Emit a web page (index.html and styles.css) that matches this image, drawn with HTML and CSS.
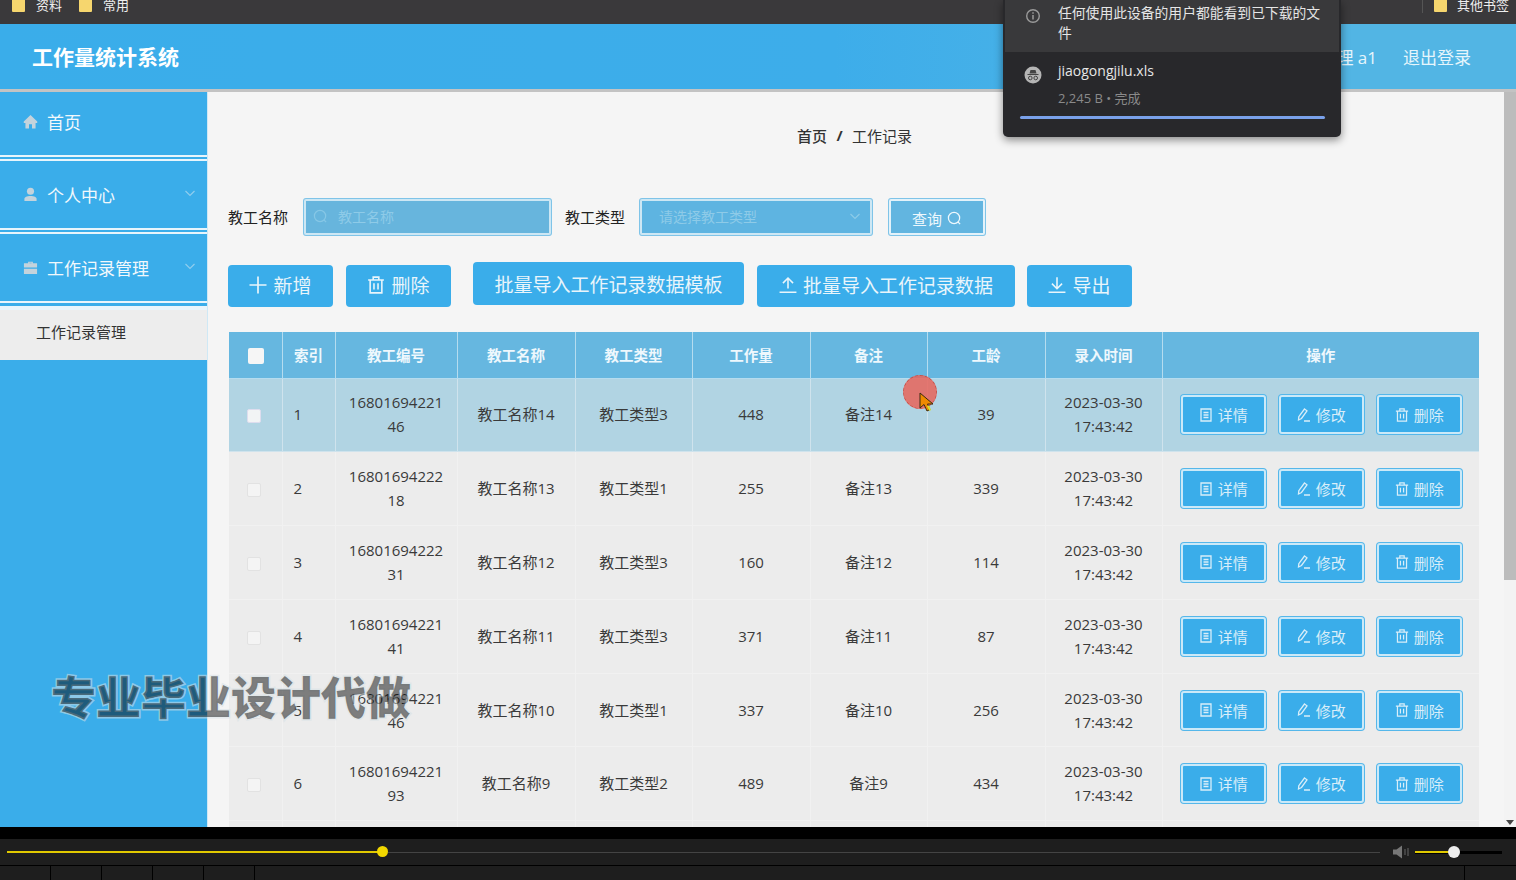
FILE: index.html
```html
<!DOCTYPE html>
<html lang="zh-CN">
<head>
<meta charset="utf-8">
<title>工作量统计系统</title>
<link rel="stylesheet" href="styles.css">
</head>
<body>
<svg class="sprite" aria-hidden="true">
  <symbol id="i-home" viewBox="0 0 16 16"><path d="M8 1 .8 8v1.500h1.800V15.500h3.800v-4.700h3.200v4.700h3.800V9.500h1.800V8z" fill="currentColor"/></symbol>
  <symbol id="i-user" viewBox="0 0 16 16"><circle cx="8" cy="4.500" r="3.800" fill="currentColor"/><path d="M1.500 15v-2.200C1.500 10.500 4 9.500 8 9.500s6.500 1 6.500 3.300V15z" fill="currentColor"/></symbol>
  <symbol id="i-case" viewBox="0 0 16 16"><path d="M5.500 3.500V1.800h5v1.700h4.500V8H1V3.500zM6.800 3.500h2.400v-.5H6.800zM1 9.200h14V15H1z" fill="currentColor"/></symbol>
  <symbol id="i-chev" viewBox="0 0 12 12"><path d="M1.500 4 6 8.500 10.500 4" fill="none" stroke="currentColor" stroke-width="1.200"/></symbol>
  <symbol id="i-search" viewBox="0 0 16 16"><circle cx="7.500" cy="7.500" r="6" fill="none" stroke="currentColor" stroke-width="1.300"/><path d="m11.500 11.500 2.500 2.500" stroke="currentColor" stroke-width="1.300"/></symbol>
  <symbol id="i-plus" viewBox="0 0 18 18"><path d="M9 .5v17M.5 9h17" stroke="currentColor" stroke-width="1.700" fill="none"/></symbol>
  <symbol id="i-trash" viewBox="0 0 16 16"><path d="M1 3.500h14M5.500 3.500V1h5v2.500M2.800 3.500V15h10.400V3.500M6.200 6.500v5.500M9.800 6.500v5.500" fill="none" stroke="currentColor" stroke-width="1.400"/></symbol>
  <symbol id="i-up" viewBox="0 0 16 16"><path d="M8 11V2M3.500 6.300 8 1.800l4.500 4.500M.5 14.500h15" fill="none" stroke="currentColor" stroke-width="1.400"/></symbol>
  <symbol id="i-down" viewBox="0 0 16 16"><path d="M8 1v10M3.500 6.800 8 11.300l4.500-4.500M.5 14.500h15" fill="none" stroke="currentColor" stroke-width="1.400"/></symbol>
  <symbol id="i-doc" viewBox="0 0 14 14"><path d="M2 1h10v12H2zM4.500 4.500h5M4.500 7h5M4.500 9.500h5" fill="none" stroke="currentColor" stroke-width="1.300"/></symbol>
  <symbol id="i-pen" viewBox="0 0 14 14"><path d="M7.500 1 10 2.800 4.500 10.500 1.500 12l.3-3.300zM7 13h6" fill="none" stroke="currentColor" stroke-width="1.300"/></symbol>
</svg>

<div class="bookmarks">
  <span class="mark"><i class="folder"></i>资料</span>
  <span class="mark"><i class="folder"></i>常用</span>
  <span class="mark mark-end"><i class="folder"></i>其他书签</span>
</div>

<header class="topbar">
  <h1 class="brand">工作量统计系统</h1>
  <div class="account"><span>管理 a1</span><span class="logout">退出登录</span></div>
</header>

<div class="shell">
  <nav class="side">
    <a class="nav-item nav-first"><svg class="nav-icon"><use href="#i-home"/></svg>首页</a>
    <div class="sep"></div>
    <a class="nav-item"><svg class="nav-icon"><use href="#i-user"/></svg>个人中心<svg class="chev"><use href="#i-chev"/></svg></a>
    <div class="sep"></div>
    <a class="nav-item"><svg class="nav-icon"><use href="#i-case"/></svg>工作记录管理<svg class="chev"><use href="#i-chev"/></svg></a>
    <div class="sep sep-wide"></div>
    <a class="nav-sub">工作记录管理</a>
  </nav>

  <main class="main">
    <div class="crumb"><b>首页</b><span class="slash">/</span><span>工作记录</span></div>

    <div class="search">
      <label class="lbl">教工名称</label>
      <div class="field field-name"><svg class="field-icon"><use href="#i-search"/></svg>教工名称</div>
      <label class="lbl lbl-type">教工类型</label>
      <div class="field field-type">请选择教工类型<svg class="field-chev"><use href="#i-chev"/></svg></div>
      <button class="query">查询<svg class="query-icon"><use href="#i-search"/></svg></button>
    </div>

    <div class="toolbar">
      <button class="tool"><svg class="tool-icon"><use href="#i-plus"/></svg>新增</button>
      <button class="tool"><svg class="tool-icon"><use href="#i-trash"/></svg>删除</button>
      <button class="tool tool-raised">批量导入工作记录数据模板</button>
      <button class="tool tool-wide"><svg class="tool-icon"><use href="#i-up"/></svg>批量导入工作记录数据</button>
      <button class="tool tool-last"><svg class="tool-icon"><use href="#i-down"/></svg>导出</button>
    </div>

    <table class="grid">
      <colgroup>
        <col class="c-a"><col class="c-a"><col class="c-b"><col class="c-c"><col class="c-d"><col class="c-c"><col class="c-d"><col class="c-c"><col class="c-d"><col class="c-e">
      </colgroup>
      <thead>
        <tr><th><i class="check check-head"></i></th><th>索引</th><th>教工编号</th><th>教工名称</th><th>教工类型</th><th>工作量</th><th>备注</th><th>工龄</th><th>录入时间</th><th>操作</th></tr>
      </thead>
      <tbody>
        <tr class="hover"><td><i class="check"></i></td><td class="idx">1</td><td class="long">1680169422146</td><td>教工名称14</td><td>教工类型3</td><td>448</td><td>备注14</td><td>39</td><td>2023-03-30 17:43:42</td><td><div class="ops"><button class="op"><svg class="op-icon"><use href="#i-doc"/></svg>详情</button><button class="op"><svg class="op-icon"><use href="#i-pen"/></svg>修改</button><button class="op"><svg class="op-icon"><use href="#i-trash"/></svg>删除</button></div></td></tr>
        <tr><td><i class="check"></i></td><td class="idx">2</td><td class="long">1680169422218</td><td>教工名称13</td><td>教工类型1</td><td>255</td><td>备注13</td><td>339</td><td>2023-03-30 17:43:42</td><td><div class="ops"><button class="op"><svg class="op-icon"><use href="#i-doc"/></svg>详情</button><button class="op"><svg class="op-icon"><use href="#i-pen"/></svg>修改</button><button class="op"><svg class="op-icon"><use href="#i-trash"/></svg>删除</button></div></td></tr>
        <tr><td><i class="check"></i></td><td class="idx">3</td><td class="long">1680169422231</td><td>教工名称12</td><td>教工类型3</td><td>160</td><td>备注12</td><td>114</td><td>2023-03-30 17:43:42</td><td><div class="ops"><button class="op"><svg class="op-icon"><use href="#i-doc"/></svg>详情</button><button class="op"><svg class="op-icon"><use href="#i-pen"/></svg>修改</button><button class="op"><svg class="op-icon"><use href="#i-trash"/></svg>删除</button></div></td></tr>
        <tr><td><i class="check"></i></td><td class="idx">4</td><td class="long">1680169422141</td><td>教工名称11</td><td>教工类型3</td><td>371</td><td>备注11</td><td>87</td><td>2023-03-30 17:43:42</td><td><div class="ops"><button class="op"><svg class="op-icon"><use href="#i-doc"/></svg>详情</button><button class="op"><svg class="op-icon"><use href="#i-pen"/></svg>修改</button><button class="op"><svg class="op-icon"><use href="#i-trash"/></svg>删除</button></div></td></tr>
        <tr><td><i class="check"></i></td><td class="idx">5</td><td class="long">1680169422146</td><td>教工名称10</td><td>教工类型1</td><td>337</td><td>备注10</td><td>256</td><td>2023-03-30 17:43:42</td><td><div class="ops"><button class="op"><svg class="op-icon"><use href="#i-doc"/></svg>详情</button><button class="op"><svg class="op-icon"><use href="#i-pen"/></svg>修改</button><button class="op"><svg class="op-icon"><use href="#i-trash"/></svg>删除</button></div></td></tr>
        <tr><td><i class="check"></i></td><td class="idx">6</td><td class="long">1680169422193</td><td>教工名称9</td><td>教工类型2</td><td>489</td><td>备注9</td><td>434</td><td>2023-03-30 17:43:42</td><td><div class="ops"><button class="op"><svg class="op-icon"><use href="#i-doc"/></svg>详情</button><button class="op"><svg class="op-icon"><use href="#i-pen"/></svg>修改</button><button class="op"><svg class="op-icon"><use href="#i-trash"/></svg>删除</button></div></td></tr>
        <tr class="stub"><td></td><td></td><td></td><td></td><td></td><td></td><td></td><td></td><td></td><td></td></tr>
      </tbody>
    </table>
  </main>

  <div class="scroll">
    <div class="thumb"></div>
    <i class="scroll-arrow"></i>
  </div>
</div>

<footer class="player">
  <div class="gap-black"></div>
  <div class="seek-row">
    <div class="seek"><div class="seek-fill"></div><i class="seek-dot"></i></div>
    <svg class="vol-icon" viewBox="0 0 16 14"><path d="M0 4.500h3.500L9 .5v13L3.500 9.500H0z" fill="#777"/><path d="M12 4v6M15 3v8" stroke="#666" stroke-width="1"/></svg>
    <div class="vol"><div class="vol-fill"></div><i class="vol-dot"></i></div>
  </div>
  <div class="btn-row">
    <i class="cell"></i><i class="cell"></i><i class="cell"></i><i class="cell"></i><i class="cell"></i>
    <i class="cell cell-fill"></i>
    <i class="cell cell-end"></i>
  </div>
</footer>

<aside class="download">
  <div class="dl-note">
    <svg class="dl-info" viewBox="0 0 16 16"><circle cx="8" cy="8" r="6.300" fill="none" stroke="#9a9a9a" stroke-width="1.400"/><path d="M8 7v4.500M8 4.300v1.500" stroke="#9a9a9a" stroke-width="1.500"/></svg>
    <p class="dl-text">任何使用此设备的用户都能看到已下载的文件</p>
  </div>
  <div class="dl-file">
    <svg class="dl-ghost" viewBox="0 0 18 18"><circle cx="9" cy="9" r="8.500" fill="#b5b5b5"/><path d="M5.500 7.500 6.500 4h5l1 3.500zM3.500 8h11v1h-11z" fill="#444"/><circle cx="6.300" cy="12" r="1.800" fill="none" stroke="#444"/><circle cx="11.700" cy="12" r="1.800" fill="none" stroke="#444"/></svg>
    <div class="dl-meta">
      <div class="dl-name">jiaogongjilu.xls</div>
      <div class="dl-size">2,245 B • 完成</div>
    </div>
  </div>
  <div class="dl-bar"></div>
</aside>

<div class="watermark">专业毕业设计代做</div>

<div class="pointer">
  <svg class="pointer-arrow" viewBox="0 0 16 20"><path d="M1 1v15l4-3.500L8 19l3-1.500-2.500-5.500H14z" fill="#ee8a00" stroke="#3a2a10" stroke-width="1"/><path d="M8 14l2.500 5 1.500-1-2-4.500z" fill="#d6e030"/></svg>
</div>
</body>
</html>
```

FILE: styles.css
```css
* { box-sizing: border-box; }
html, body { margin: 0; padding: 0; }
body {
  position: relative;
  width: 1516px;
  height: 880px;
  overflow: hidden;
  display: flex;
  flex-direction: column;
  background: #000;
  font-family: "Open Sans", "Noto Sans CJK SC", sans-serif;
  font-size: 15px;
  color: #333;
}
button { font-family: inherit; cursor: pointer; }
.sprite { display: none; }

/* bookmarks bar */
.bookmarks {
  flex: 0 0 24px;
  height: 24px;
  background: #3a393b;
  display: flex;
  align-items: flex-start;
  overflow: hidden;
  padding-left: 12px;
  color: #eee;
  font-size: 13px;
  line-height: 11px;
}
.mark { display: flex; align-items: flex-start; gap: 11px; margin-right: 17px; }
.mark-end { margin-left: auto; margin-right: 7px; padding-left: 11px; border-left: 1px solid #555; height: 13px; gap: 10px; }
.folder { display: block; width: 13px; height: 12px; background: #f6d66e; border-radius: 0 0 1px 1px; }

/* header */
.topbar {
  flex: 0 0 68px;
  height: 68px;
  background: linear-gradient(90deg, #3aadea 0%, #3dadea 55%, #52b5e4 85%, #52b5e4 100%);
  border-bottom: 3px solid #c3c3c3;
  display: flex;
  align-items: center;
  justify-content: space-between;
  padding: 0 45px 0 32px;
  color: #fff;
}
.brand { margin: 2px 0 0; font-size: 21px; font-weight: 700; line-height: 1; }
.account { font-size: 17px; display: flex; gap: 26px; color: #e6f5fc; }

/* body shell */
.shell { flex: 0 0 735px; height: 735px; display: flex; overflow: hidden; }
.side {
  flex: 0 0 208px;
  background: #3aadea;
  border-right: 1px solid #cfe8f5;
  color: #f1f8fc;
  font-size: 17px;
}
.nav-item {
  height: 67px;
  display: flex;
  align-items: center;
  padding-left: 23px;
  position: relative;
}
.nav-first { height: 63px; padding-bottom: 4px; }
.nav-icon { width: 15px; height: 15px; margin-right: 9px; color: #c4d3dc; }
.chev { width: 12px; height: 12px; margin: 0 11px 4px auto; color: #8fcdee; }
.sep { height: 6px; border-top: 2px solid #e8f5fc; border-bottom: 2px solid #e8f5fc; }
.sep-wide { height: 9px; border-bottom-width: 4px; }
.nav-sub {
  height: 50px;
  display: flex;
  align-items: center;
  padding: 0 0 7px 36px;
  background: #ededed;
  color: #333;
  font-size: 15px;
}

/* main */
.main { flex: 1 1 auto; background: #f5f5f5; padding: 30px 25px 0 20px; overflow: hidden; min-width: 0; }
.crumb { height: 30px; padding: 0 0 4px 2px; display: flex; justify-content: center; align-items: center; gap: 9.500px; color: #333; font-size: 15px; }
.crumb b { font-weight: 500; }
.slash { font-weight: 700; }

.search { margin-top: 46px; height: 38px; display: flex; align-items: center; }
.lbl { color: #222; font-size: 15px; padding-bottom: 2px; }
.lbl-type { margin-left: 14px; }
.field {
  height: 36px;
  margin-left: 15px;
  display: flex;
  align-items: center;
  background: #67b5dd;
  border: 2px solid #cde7f4;
  box-shadow: 0 0 0 1px #7fc4e8;
  border-radius: 2px;
  color: #8ecbe8;
  font-size: 14px;
  padding-bottom: 2px;
}
.field-name { width: 247px; margin-left: 16px; padding-left: 7px; }
.field-type { width: 232px; padding-left: 17px; background: #5eb4e1; }
.field-icon { width: 15px; height: 15px; margin-right: 10px; color: #86c7e6; }
.field-chev { width: 12px; height: 12px; margin-left: auto; margin-right: 9px; color: #8ccbe8; }
.query {
  margin-left: 17px;
  width: 96px;
  height: 36px;
  background: #62b5e0;
  border: 2px solid #e3f2fa;
  box-shadow: 0 0 0 1px #7fc4e8;
  border-radius: 2px;
  color: #eef8fd;
  font-size: 15px;
  display: flex;
  align-items: center;
  justify-content: center;
  gap: 5px;
  padding: 2px 0 0;
}
.query-icon { width: 15px; height: 15px; }

.toolbar { margin-top: 26px; height: 45px; display: flex; align-items: flex-start; gap: 13px; }
.tool {
  margin-top: 3px;
  width: 105px;
  height: 42px;
  padding: 0 0 2px;
  border: 0;
  border-radius: 4px;
  background: #3aadea;
  color: #e9f5fb;
  font-size: 19px;
  display: flex;
  align-items: center;
  justify-content: center;
  gap: 6px;
}
.tool-raised { margin: 0 0 0 9px; height: 43px; width: 271px; padding: 0; }
.tool-wide { width: 258px; }
.tool-last { margin-left: -1px; }
.tool-icon { width: 18px; height: 18px; }

/* table */
.grid {
  margin: 25px 0 0 1px;
  width: 1250px;
  table-layout: fixed;
  border-collapse: collapse;
}
.c-a { width: 53px; }
.c-b { width: 122px; }
.c-c { width: 118px; }
.c-d { width: 117px; }
.c-e { width: 317px; }
.grid th {
  height: 46px;
  padding: 0 0 1px;
  background: #66b7e0;
  border: 1px solid #b5dcef;
  border-top: 0;
  color: #eef8fd;
  font-size: 14.500px;
  font-weight: 700;
}
.grid th:first-child, .grid td:first-child { border-left: 0; }
.grid th:last-child, .grid td:last-child { border-right: 0; }
.grid td {
  height: 73.800px;
  padding: 0 10px 1px;
  background: #ececec;
  border: 1px solid #f1f1f1;
  text-align: center;
  line-height: 24px;
  color: #3a3a3a;
  font-size: 15px;
}
.grid td.idx { text-align: left; padding-left: 11px; }
.grid td.long { word-break: break-all; padding: 0 12px 1px; }
.grid td:last-child { padding: 0 0 0 1px; }
.hover td { background: #b1d4e3; border-color: #cfe3ed; }
.stub td { height: 10px; }
.check { display: inline-block; width: 14px; height: 14px; vertical-align: middle; margin: 0 3px 0 0; background: #f4f4f4; border: 1px solid #e2e2e2; border-radius: 2px; }
.check-head { width: 16px; height: 16px; background: #f6f6f6; border: 0; margin: 0 0 0 1px; }
.hover .check { border-color: #dde; background: #f2f4f5; }
.ops { display: flex; justify-content: center; gap: 13px; }
.op {
  width: 85px;
  height: 39px;
  padding: 0;
  background: #3aadea;
  border: 2px solid #cbe9f8;
  box-shadow: 0 0 0 1px #55b7ea;
  border-radius: 3px;
  color: #d9eef9;
  font-size: 15px;
  display: flex;
  align-items: center;
  justify-content: center;
  gap: 5px;
}
.op-icon { width: 14px; height: 14px; }

/* scrollbar */
.scroll { flex: 0 0 12px; background: #f3f3f3; position: relative; }
.thumb { height: 488px; background: #bcbcbc; }
.scroll-arrow { position: absolute; left: 2px; bottom: 2px; width: 0; height: 0; border: 4px solid transparent; border-top: 5px solid #444; border-bottom: 0; }

/* player */
.player { flex: 1 1 auto; background: #1e1e1e; display: flex; flex-direction: column; }
.gap-black { height: 12px; background: #000; }
.seek-row { height: 26px; display: flex; align-items: center; padding: 0 14px 0 7px; }
.seek { flex: 0 0 1373px; height: 1px; background: #444; position: relative; }
.seek-fill { position: absolute; left: 0; top: -1px; height: 2px; width: 375px; background: #e0c900; }
.seek-dot { position: absolute; left: 370px; top: -6px; width: 11px; height: 11px; border-radius: 50%; background: #f2d800; }
.vol-icon { width: 16px; height: 14px; margin: 0 6px 0 13px; }
.vol { flex: 1 1 auto; height: 3px; background: #000; position: relative; }
.vol-fill { position: absolute; left: 0; top: 0; height: 2px; width: 39px; background: #e0c900; }
.vol-dot { position: absolute; left: 33px; top: -5px; width: 12px; height: 12px; border-radius: 50%; background: #eee; }
.btn-row { flex: 1 1 auto; display: flex; border-top: 1px solid #000; }
.cell { width: 51px; border-right: 1px solid #000; }
.cell-fill { flex: 1 1 auto; }
.cell-end { width: 51px; border: 0; }

/* download bubble */
.download {
  position: absolute;
  left: 1003px;
  top: 0;
  width: 338px;
  height: 137px;
  background: #28282b;
  border-radius: 0 0 5px 5px;
  box-shadow: 0 3px 8px rgba(0, 0, 0, .45);
  color: #e6e6e6;
}
.dl-note { height: 52px; background: #39393b; display: flex; padding: 3px 14px 0 20px; margin: 0 2px; }
.dl-info { width: 16px; height: 16px; margin: 5px 17px 0 0; flex: none; }
.dl-text { margin: 0; font-size: 13.800px; line-height: 20px; }
.dl-file { display: flex; padding: 9px 0 0 21px; }
.dl-ghost { width: 18px; height: 18px; margin: 5px 16px 0 0; flex: none; }
.dl-name { font-size: 14px; line-height: 20px; }
.dl-size { margin-top: 7px; font-size: 13px; line-height: 20px; color: #8a8a8a; }
.dl-bar { margin: 8px 0 0 17px; width: 305px; height: 3px; background: #7aa1ea; border-radius: 2px; }

/* overlays */
.watermark {
  position: absolute;
  left: 51px;
  top: 667px;
  font-size: 45px;
  line-height: 58px;
  font-weight: 900;
  font-family: "Noto Sans CJK SC", sans-serif;
  color: rgba(0, 0, 0, .48);
  -webkit-text-stroke: 3px rgba(215, 225, 230, .55);
  paint-order: stroke fill;
  white-space: nowrap;
}
.pointer {
  position: absolute;
  left: 903px;
  top: 375px;
  width: 34px;
  height: 34px;
  border-radius: 50%;
  background: rgba(232, 100, 90, .85);
  border: 1px dashed #c9524a;
}
.pointer-arrow { position: absolute; left: 15px; top: 16px; width: 16px; height: 20px; }
```
